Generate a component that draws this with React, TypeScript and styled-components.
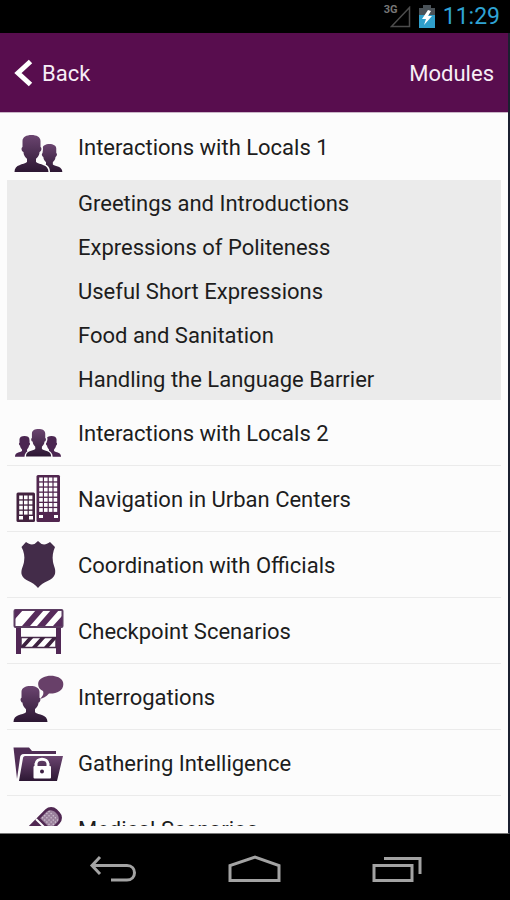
import React from "react";
import styled, { createGlobalStyle } from "styled-components";

const Global = createGlobalStyle`
  *, *::before, *::after { box-sizing: border-box; }
  body { margin: 0; background: #000; font-family: Roboto, sans-serif; }
  button { font: inherit; color: inherit; background: none; border: 0; padding: 0; margin: 0; cursor: pointer; }
  h1, ul { margin: 0; padding: 0; }
  ul { list-style: none; }
  svg { display: block; flex: none; }
`;

const Screen = styled.div`
  display: flex;
  flex-direction: column;
  height: 100vh;
  background: #000;
`;

const StatusBar = styled.div`
  display: flex;
  align-items: center;
  justify-content: flex-end;
  flex: none;
  height: 33px;
  padding-right: 10px;
  gap: 8px;
`;

const Signal = styled.div`
  position: relative;
`;

const Network = styled.span`
  position: absolute;
  left: -6px;
  top: -2px;
  font-size: 11px;
  font-weight: 700;
  line-height: 12px;
  color: #777;
`;

const Clock = styled.time`
  font-size: 23px;
  line-height: 32px;
  color: #2fa3d3;
`;

const AppFrame = styled.div`
  display: flex;
  flex-direction: column;
  flex: 1;
  min-height: 0;
  border-right: 2px solid #1b2030;
  border-bottom: 1px solid #777;
  background: #fcfcfc;
`;

const Header = styled.header`
  display: flex;
  align-items: center;
  justify-content: space-between;
  flex: none;
  height: 80px;
  padding: 2px 14px 0;
  border-bottom: 1px solid #c9b5c7;
  background: #580d4e;
  color: #f7eef6;
  font-size: 22px;
  line-height: 28px;
`;

const BackButton = styled.button`
  display: flex;
  align-items: center;
  gap: 9px;
`;

const Title = styled.h1`
  font-size: 22px;
  font-weight: 400;
`;

const Modules = styled.ul`
  flex: 1;
  min-height: 0;
  margin: 0 7px 7px;
  overflow: hidden;
  color: #1d1d1d;
  font-size: 22px;
  line-height: 28px;
`;

const ModuleItem = styled.li<{ $open: boolean }>`
  border-bottom: ${(p) => (p.$open ? "0" : "1px solid #ebebeb")};
`;

const ModuleButton = styled.button<{ $open: boolean }>`
  display: flex;
  align-items: center;
  gap: 14px;
  width: 100%;
  height: ${(p) => (p.$open ? "67px" : "65px")};
  padding-left: 5px;
  text-align: left;
`;

const ModuleName = styled.span`
  padding-top: 2px;
`;

const Lessons = styled.ul`
  background: #ebebeb;
`;

const LessonButton = styled.button`
  display: block;
  width: 100%;
  height: 44px;
  padding: 3px 0 0 71px;
  text-align: left;
`;

const NavBar = styled.nav`
  display: flex;
  align-items: center;
  justify-content: center;
  gap: 70px;
  flex: none;
  height: 66px;
  padding-top: 4px;
`;

const NavButton = styled.button`
  display: flex;
  align-items: center;
  justify-content: center;
  width: 72px;
  height: 48px;
`;

const Icon = ({ children }: { children: React.ReactNode }) => (
  <svg width="52" height="52" viewBox="0 0 52 52" aria-hidden="true">
    <defs>
      <linearGradient id="plum" x1="0" y1="0" x2="0" y2="1">
        <stop offset="0" stopColor="#6b4570" />
        <stop offset="1" stopColor="#2c1733" />
      </linearGradient>
    </defs>
    {children}
  </svg>
);

const PERSON =
  "M17 0C22 0 26 2 26 6V12C28 13 26.500 17 25 17C25 21 22 23 21.500 24V27C25 30 34 29 34 37H0C0 29 9 30 12.500 27V24C12 23 9 21 9 17C7.500 17 6 13 8 12V6C8 2 12 0 17 0Z";

const PairIcon = () => (
  <Icon>
    <path transform="translate(24.500 23) scale(.76)" d={PERSON} fill="url(#plum)" />
    <path transform="translate(2.500 14)" d={PERSON} fill="url(#plum)" stroke="#fcfcfc" strokeWidth="3" />
    <path transform="translate(2.500 14)" d={PERSON} fill="url(#plum)" />
  </Icon>
);

const GroupIcon = () => (
  <Icon>
    <path transform="translate(3 29) scale(.56)" d={PERSON} fill="#4b2651" />
    <path transform="translate(30 29) scale(.56)" d={PERSON} fill="#4b2651" />
    <path transform="translate(14 22) scale(.74)" d={PERSON} fill="#512b58" stroke="#fcfcfc" strokeWidth="4" />
    <path transform="translate(14 22) scale(.74)" d={PERSON} fill="url(#plum)" />
  </Icon>
);

const windows = (x: number, y: number, cols: number, rows: number) =>
  Array.from({ length: cols * rows }, (_, i) => (
    <rect key={i} x={x + (i % cols) * 4.8} y={y + Math.floor(i / cols) * 5.1} width="3.6" height="3.8" fill="#fff" />
  ));

const CityIcon = () => (
  <Icon>
    <rect x="24.5" y="2" width="23.5" height="47" rx="1.5" fill="#51264f" />
    {windows(27.2, 4.5, 4, 7)}
    <path d="M27 42h4v3h-4zM42 42h4v3h-4z" fill="#fff" />
    <rect x="4.5" y="19.5" width="18.5" height="29.5" rx="1.5" fill="#42223f" />
    {windows(7.2, 22.5, 3, 4)}
    <path d="M7 43h4v3.500h-4zM17 43h4v3.500h-4z" fill="#fff" />
  </Icon>
);

const ShieldIcon = () => (
  <Icon>
    <path
      d="M26 2 L29.500 5 C33 6 35 5 38 3 L43 8 C41 13 40 17 41 23 C42 28 44 30 43 35 C41 42 31 42 26 49 C21 42 11 42 9.500 35 C9 30 11 28 12 23 C13 17 12 13 9.500 8 L14 3 C17 5 19 6 22.500 5 Z"
      fill="#432c49"
    />
  </Icon>
);

const BarrierIcon = () => (
  <Icon>
    <path d="M4 21h5v28H4zM44 21h5v28h-5z" fill="#512755" />
    <rect x="9" y="32.500" width="35" height="10" fill="#fff" stroke="#4a2b4d" strokeWidth="1.500" />
    <path d="M9 41l8-9h5l-9 10H9zM20 42l9-10h5l-9 10zM32 42l9-10h3v2l-7 8z" fill="#3d2140" />
    <rect x="2.500" y="5" width="48" height="17" rx="1" fill="#fff" stroke="#5c3d62" strokeWidth="2" />
    <path d="M3 5H11L3 14zM10 21L24 5h8L18 21zM25 21L39 5h8L33 21zM41 21l9-10v10z" fill="#572b5c" />
  </Icon>
);

const InterrogationIcon = () => (
  <Icon>
    <path transform="translate(1.500 15) scale(1 .97)" d={PERSON} fill="url(#plum)" />
    <path d="M31 20C25 18 24 9 31 6.500C38 3 49 5 51 11C53 19 45 23 37 22.500C34 26 31 27 28 28C31 25 32 23 31 20Z" fill="#684069" />
  </Icon>
);

const FolderIcon = () => (
  <Icon>
    <path d="M1.500 10.500H17L20 14H44V17H12C9 17 8 19 8 21L5 42Z" fill="#4f2d55" />
    <path d="M13 19H51L45 44H7L11 21C11 20 12 19 13 19Z" fill="url(#plum)" />
    <path d="M24 31V27C24 20.500 36 20.500 36 27V31" fill="none" stroke="#fff" strokeWidth="3" />
    <rect x="21.500" y="29" width="17.500" height="12.500" rx="1" fill="#fff" />
    <circle cx="30" cy="34.500" r="2" fill="#3d2144" />
  </Icon>
);

const BandageIcon = () => (
  <Icon>
    <g transform="translate(-1 3) rotate(-45 26 26)">
      <rect x="-4" y="16" width="60" height="20" rx="8" fill="#502852" />
      <path d="M38 18.500h9c8 0 8 15 0 15h-9z" fill="#9b829d" />
      <path d="M34.500 16v20" stroke="#fff" strokeWidth="2" />
      <g fill="#d5c8d6">
        {Array.from({ length: 20 }, (_, i) => (
          <circle key={i} cx={40 + (i % 4) * 3} cy={20 + Math.floor(i / 4) * 3} r=".7" />
        ))}
      </g>
    </g>
  </Icon>
);

const lessons = [
  "Greetings and Introductions",
  "Expressions of Politeness",
  "Useful Short Expressions",
  "Food and Sanitation",
  "Handling the Language Barrier",
];

const modules = [
  { name: "Interactions with Locals 1", Art: PairIcon, lessons },
  { name: "Interactions with Locals 2", Art: GroupIcon },
  { name: "Navigation in Urban Centers", Art: CityIcon },
  { name: "Coordination with Officials", Art: ShieldIcon },
  { name: "Checkpoint Scenarios", Art: BarrierIcon },
  { name: "Interrogations", Art: InterrogationIcon },
  { name: "Gathering Intelligence", Art: FolderIcon },
  { name: "Medical Scenarios", Art: BandageIcon },
];

export default function App() {
  return (
    <Screen>
      <Global />
      <StatusBar>
        <Signal>
          <Network>3G</Network>
          <svg width="21" height="22" viewBox="0 0 21 22" aria-hidden="true">
            <path d="M1.500 20.500L19.500 1.500V20.500Z" fill="none" stroke="#4c4c4c" strokeWidth="1.500" />
          </svg>
        </Signal>
        <svg width="16" height="24" viewBox="0 0 16 24" aria-hidden="true">
          <path d="M4 0h8v3h4v8H0V3h4z" fill="#4a5258" />
          <path d="M0 10h16v13H0z" fill="#2f9fcb" />
          <path d="M9 5L3 14h4l-2 6 8-9H9l3-5z" fill="#fff" />
        </svg>
        <Clock>11:29</Clock>
      </StatusBar>
      <AppFrame>
        <Header>
          <BackButton>
            <svg width="19" height="30" viewBox="0 0 19 30" aria-hidden="true">
              <path d="M16.500 2.500L4 14L16.500 25.500" fill="none" stroke="#fff" strokeWidth="5" />
            </svg>
            Back
          </BackButton>
          <Title>Modules</Title>
        </Header>
        <Modules>
          {modules.map(({ name, Art, lessons: items }) => (
            <ModuleItem key={name} $open={!!items}>
              <ModuleButton $open={!!items}>
                <Art />
                <ModuleName>{name}</ModuleName>
              </ModuleButton>
              {items && (
                <Lessons>
                  {items.map((item) => (
                    <li key={item}>
                      <LessonButton>{item}</LessonButton>
                    </li>
                  ))}
                </Lessons>
              )}
            </ModuleItem>
          ))}
        </Modules>
      </AppFrame>
      <NavBar>
        <NavButton aria-label="Back">
          <svg width="48" height="28" viewBox="0 0 48 28" fill="none" stroke="#a3a3a3" strokeWidth="3" aria-hidden="true">
            <path d="M11 2L3 10.500L11 19M3 10.500H38C48 10.500 48 25 38 25H22" />
          </svg>
        </NavButton>
        <NavButton aria-label="Home">
          <svg width="54" height="28" viewBox="0 0 54 28" fill="none" stroke="#a3a3a3" strokeWidth="3" aria-hidden="true">
            <path d="M2 25.500V10.500L27 2L51 10.500V25.500Z" />
          </svg>
        </NavButton>
        <NavButton aria-label="Recent apps">
          <svg width="50" height="28" viewBox="0 0 50 28" fill="none" stroke="#a3a3a3" strokeWidth="3" aria-hidden="true">
            <path d="M2 10.500H40V25.500H2ZM12 3.500H48V19" />
          </svg>
        </NavButton>
      </NavBar>
    </Screen>
  );
}
